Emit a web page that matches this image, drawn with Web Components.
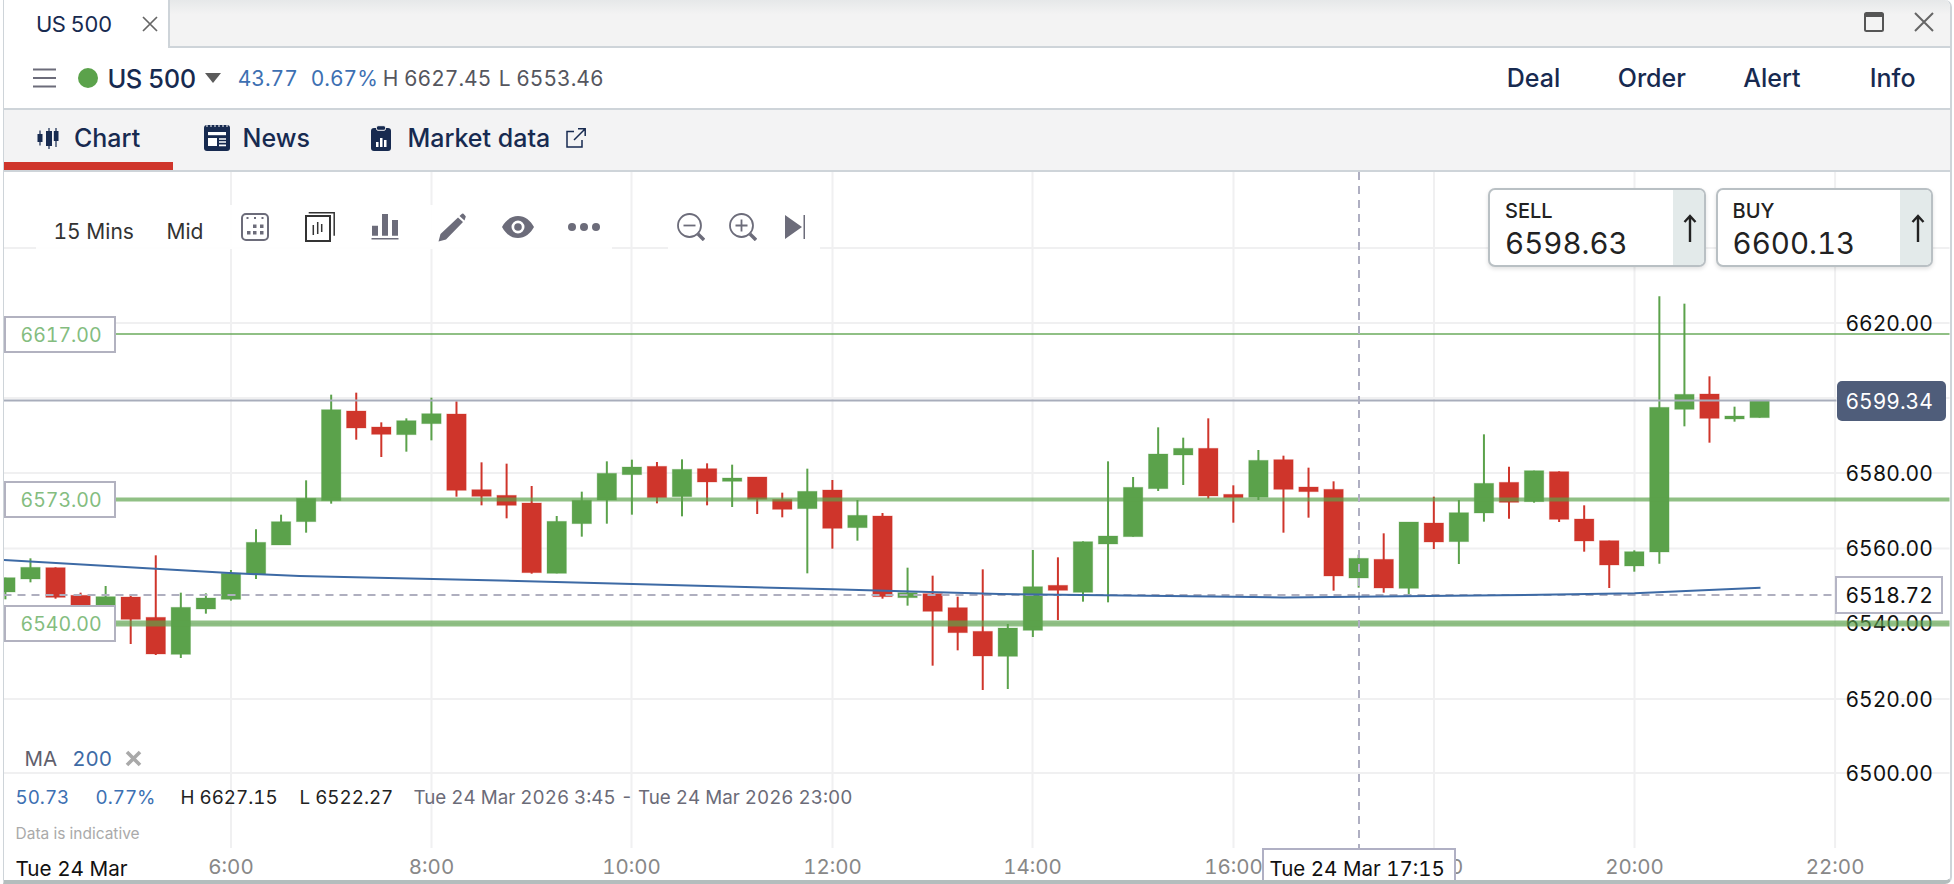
<!doctype html>
<html>
<head>
<meta charset="utf-8">
<title>US 500</title>
<style>
	html, body { margin: 0; padding: 0; background: #fff; }
	body {
		width: 1954px;
		height: 884px;
		overflow: hidden;
		font-family: Inter, "Liberation Sans", sans-serif;
		font-variant-numeric: tabular-nums;
	}
</style>
</head>
<body>
<chart-window>
	<title-bar></title-bar>
	<instrument-bar></instrument-bar>
	<section-tabs></section-tabs>
	<candle-chart></candle-chart>
</chart-window>

<script>
const NAVY = '#172a50';
const GREY = '#6c6c7a';

class ChartWindow extends HTMLElement {
	constructor() {
		super();
		this.attachShadow({ mode: 'open' }).innerHTML = `
<style>
	:host {
		display: flex;
		flex-direction: column;
		box-sizing: border-box;
		height: 884px;
		margin-left: 3px;
		width: 1949px;
		border-left: 1.5px solid #ced4d9;
		border-right: 2px solid #ced4d9;
		border-bottom: 4px solid #b4bdbd;
		border-top-right-radius: 7px;
		border-bottom-right-radius: 7px;
		overflow: hidden;
		background: #fff;
	}
</style>
<slot></slot>
		`;
	}
}

class TitleBar extends HTMLElement {
	constructor() {
		super();
		this.attachShadow({ mode: 'open' }).innerHTML = `
<style>
	:host {
		display: flex;
		height: 48px;
		box-sizing: border-box;
		background: linear-gradient(#e6e8e9, #f3f3f3 30%);
		font-size: 22px;
		color: ${NAVY};
	}
	.tab {
		display: flex;
		align-items: center;
		box-sizing: border-box;
		width: 166px;
		height: 48px;
		padding-left: 32px;
		background: #fff;
		border-right: 2px solid #ced4d9;
		letter-spacing: -0.6px;
	}
	.tab svg { margin-left: 30px; }
	.rest {
		flex: 1;
		display: flex;
		align-items: center;
		justify-content: flex-end;
		gap: 30px;
		padding: 0 16px 2px 0;
		border-bottom: 2px solid #ced4d9;
	}
</style>
<div class="tab">
	<span>US 500</span>
	<svg width="16" height="16" viewBox="0 0 16 16"><path d="M1 1l14 14M15 1L1 15" stroke="#666" stroke-width="1.7"/></svg>
</div>
<div class="rest">
	<svg width="20" height="20" viewBox="0 0 20 20"><rect x="1" y="1" width="18" height="18" rx="1.5" fill="none" stroke="#555" stroke-width="2"/><rect x="1" y="1" width="18" height="4" fill="#555"/></svg>
	<svg width="20" height="20" viewBox="0 0 20 20"><path d="M1 1l18 18M19 1L1 19" stroke="#666" stroke-width="2"/></svg>
</div>
		`;
	}
}

class InstrumentBar extends HTMLElement {
	constructor() {
		super();
		this.attachShadow({ mode: 'open' }).innerHTML = `
<style>
	:host {
		display: flex;
		align-items: center;
		box-sizing: border-box;
		height: 62px;
		padding-left: 28.5px;
		border-bottom: 2px solid #ced4d9;
		font-size: 21px;
		color: #55565e;
	}
	.menu { margin-right: 22px; }
	.dot {
		width: 20px;
		height: 20px;
		border-radius: 50%;
		background: #5ba24b;
		margin-right: 10px;
	}
	.name {
		font-size: 25.5px;
		font-weight: 500;
		color: ${NAVY};
		letter-spacing: -0.6px;
		margin-right: 9px;
	}
	.blue { color: #3d70b2; }
	.caret { margin-right: 17px; }
	.stats {
		display: grid;
		grid-template-columns: 73px 72px 116px auto;
	}
	.actions {
		margin-left: auto;
		margin-right: 34.5px;
		display: grid;
		grid-template-columns: 111px 125.5px 126.5px auto;
		font-size: 25px;
		font-weight: 500;
		color: ${NAVY};
	}
</style>
<svg class="menu" width="23" height="20" viewBox="0 0 23 20"><path d="M0 1.5h23M0 10h23M0 18.5h23" stroke="${GREY}" stroke-width="2.2"/></svg>
<span class="dot"></span>
<span class="name">US 500</span>
<svg class="caret" width="16" height="10" viewBox="0 0 16 10"><path d="M0 0h16L8 10z" fill="#5b5b5b"/></svg>
<div class="stats">
	<span class="blue">43.77</span>
	<span class="blue">0.67%</span>
	<span>H 6627.45</span>
	<span>L 6553.46</span>
</div>
<div class="actions"><span>Deal</span><span>Order</span><span>Alert</span><span>Info</span></div>
		`;
	}
}

class SectionTabs extends HTMLElement {
	constructor() {
		super();
		this.attachShadow({ mode: 'open' }).innerHTML = `
<style>
	:host {
		display: flex;
		box-sizing: border-box;
		height: 62px;
		background: #f3f3f4;
		border-bottom: 2px solid #ced4d9;
		font-size: 25px;
		font-weight: 500;
		color: ${NAVY};
	}
	.tab {
		display: flex;
		align-items: center;
		box-sizing: border-box;
		height: 60px;
		padding-bottom: 4px;
	}
	.chart {
		width: 169px;
		padding: 4px 0 0 33px;
		gap: 15px;
		border-bottom: 8px solid #cf352b;
	}
	.news { margin-left: 30.5px; gap: 13px; }
	.market { margin-left: 61.5px; gap: 16px; }
</style>
<div class="tab chart">
	<svg width="22" height="21" viewBox="0 0 22 21" fill="${NAVY}">
		<path d="M2.4 2.5h1.2v15H2.4zM11.4 0h1.2v21h-1.2zM18.4 0h1.2v19h-1.2z"/>
		<rect x="0.5" y="6" width="5" height="8"/><rect x="9" y="3" width="6" height="15"/><rect x="16.8" y="3" width="4.7" height="10"/>
	</svg>
	<span>Chart</span>
</div>
<div class="tab news">
	<svg width="26" height="26" viewBox="0 0 26 26">
		<rect width="26" height="26" rx="3" fill="${NAVY}"/>
		<path d="M2 1h22" stroke="#fff" stroke-width="1" stroke-dasharray="2 2"/>
		<rect x="4" y="7" width="18" height="3.2" fill="#fff"/>
		<rect x="4" y="13" width="9" height="8" fill="#fff"/>
		<path d="M15 14h7M15 17h7M15 20.4h7" stroke="#fff" stroke-width="1.6"/>
	</svg>
	<span>News</span>
</div>
<div class="tab market">
	<svg width="20" height="26" viewBox="0 0 20 26">
		<rect y="3" width="20" height="23" rx="3" fill="${NAVY}"/>
		<rect x="5.5" y="0.7" width="9" height="4.6" rx="1.5" fill="${NAVY}" stroke="#f3f3f4" stroke-width="1"/>
		<path d="M5 17h2.5v5H5zM9 13h2.5v9H9zM13 15h2.5v7H13z" fill="#fff"/>
	</svg>
	<span>Market data</span>
	<svg width="20" height="20" viewBox="0 0 20 20" fill="none" stroke="${NAVY}" stroke-width="1.5">
		<path d="M8 3.5H1V19h15v-7M8 12L19 1M12 .8h7.2V8"/>
	</svg>
</div>
		`;
	}
}

class PriceCard extends HTMLElement {
	constructor() {
		super();
		this.attachShadow({ mode: 'open' }).innerHTML = `
<style>
	:host {
		display: flex;
		box-sizing: border-box;
		width: 217.5px;
		height: 79px;
		background: #fff;
		border: 2px solid #b9c0c4;
		border-radius: 7px;
		box-shadow: 0 2px 4px rgba(0,0,0,.12);
		overflow: hidden;
		color: #222;
	}
	.text {
		flex: 1;
		padding: 10px 0 0 15px;
	}
	.label { font-size: 20px; font-weight: 500; line-height: 22px; }
	.value { font-size: 29.5px; line-height: 38px; margin-top: 2px; }
	.side {
		display: flex;
		align-items: center;
		justify-content: center;
		box-sizing: border-box;
		width: 31px;
		padding-left: 4px;
		background: #e3eaea;
	}
</style>
<div class="text">
	<div class="label"><slot name="label"></slot></div>
	<div class="value"><slot name="value"></slot></div>
</div>
<div class="side">
	<svg width="14" height="28" viewBox="0 0 14 28" fill="none" stroke="#222" stroke-width="2.4"><path d="M7 28V2M1.5 8L7 2l5.5 6"/></svg>
</div>
		`;
	}
}

class ChartToolbar extends HTMLElement {
	constructor() {
		super();
		this.attachShadow({ mode: 'open' }).innerHTML = `
<style>
	:host {
		position: absolute;
		left: 32px;
		top: 33px;
		display: flex;
		gap: 56px;
		font-size: 21px;
		color: #333;
	}
	.group {
		display: flex;
		align-items: center;
		height: 44px;
		background: rgba(255,255,255,.93);
		padding: 0 12px 0 17.5px;
	}
	.group.zoom { padding: 0 15px 0 9px; }
	.group span { box-sizing: border-box; padding-top: 8px; white-space: nowrap; }
	.mins { width: 113px; }
	.mid { width: 74px; }
	svg { display: block; flex: none; }
</style>
<div class="group">
	<span class="mins">15 Mins</span>
	<span class="mid">Mid</span>
	<svg width="28" height="28" viewBox="0 0 28 28" fill="${GREY}" style="margin-right:36px">
		<rect x="1" y="1" width="26" height="26" rx="4" fill="none" stroke="${GREY}" stroke-width="2"/>
		<path d="M5.5 4h2v2h-2zM13 4h2v2h-2zM20.5 4h2v2h-2zM12 11.5h3.5V15H12zM19 11.5h3.5V15H19zM6 18h3.5v3.5H6zM12 18h3.5v3.5H12zM19 18h3.5v3.5H19z"/>
	</svg>
	<svg width="30" height="30" viewBox="0 0 30 30" fill="none" stroke="#333" style="margin-right:36px">
		<path d="M3.7.8h25.5v23" stroke-width="1.5"/>
		<rect x="1" y="4" width="24" height="25" stroke-width="2"/>
		<path d="M8.3 13v10M12.7 10v12M16.7 12v8" stroke-width="1.5"/>
	</svg>
	<svg width="28" height="26" viewBox="0 0 28 26" fill="${GREY}" style="margin-right:39px">
		<path d="M1 11.7h6v10H1zM11 0h6v21.7h-6zM21 6h6v15.7h-6zM.5 24h27v1.5H.5z"/>
	</svg>
	<svg width="28" height="29" viewBox="0 0 28 29" fill="${GREY}" style="margin-right:36px">
		<path d="M.5 28.5L2.5 21 20 4.5 25 9 8 26.5zM21.5 3L24 .8q.8-.6 1.5 0l2 2.2q.6.8 0 1.5L26.5 7.5z"/>
	</svg>
	<svg width="32" height="22" viewBox="0 0 32 22" fill="${GREY}" style="margin-right:34px">
		<path fill-rule="evenodd" d="M16 0C9 0 3.5 4.5 0 11c3.5 6.5 9 11 16 11s12.5-4.5 16-11C28.5 4.5 23 0 16 0zm0 4.5a6.500 6.500 0 1 1 0 13 6.500 6.500 0 0 1 0-13z"/>
		<circle cx="16" cy="11" r="3.8"/>
	</svg>
	<svg width="32" height="10" viewBox="0 0 32 10" fill="${GREY}">
		<circle cx="4" cy="5" r="4"/><circle cx="16" cy="5" r="4"/><circle cx="28" cy="5" r="4"/>
	</svg>
</div>
<div class="group zoom">
	<svg width="28" height="28" viewBox="0 0 28 28" fill="none" stroke="${GREY}" style="margin-right:24px">
		<circle cx="12.5" cy="12.5" r="11.5" stroke-width="1.8"/>
		<path d="M6.5 12.5h12" stroke-width="1.8"/>
		<path d="M21 21l6 6" stroke-width="3.4"/>
	</svg>
	<svg width="28" height="28" viewBox="0 0 28 28" fill="none" stroke="${GREY}" style="margin-right:28px">
		<circle cx="12.5" cy="12.5" r="11.5" stroke-width="1.8"/>
		<path d="M6.5 12.5h12M12.5 6.5v12" stroke-width="1.8"/>
		<path d="M21 21l6 6" stroke-width="3.4"/>
	</svg>
	<svg width="20" height="24" viewBox="0 0 20 24" fill="${GREY}"><path d="M0 0l17 12L0 24zM18.5 0H20v24h-1.5z"/></svg>
</div>
		`;
	}
}

// body of each candle read off the reference: colour, wick top, wick bottom, body top, body bottom
// values are in 3x crop units, grouped by the crop's y origin
const G = 'g', R = 'r';
const candleGroups = [
	[280, [
		[G, 893, 958, 893, 936], [G, 835, 907, 862, 897], [R, 862, 956, 863, 952], [R, 938, 990, 946, 985],
		[G, 918, 985, 950, 980], [R, 943, 1092, 951, 1018], [R, 826, 1125, 1012, 1122], [G, 938, 1134, 982, 1123],
		[G, 940, 1001, 954, 987], [G, 870, 962, 880, 958], [G, 748, 897, 787, 882], [G, 704, 795, 725, 795],
		[G, 601, 758, 655, 725], [G, 344, 671, 389, 662], [R, 338, 479, 393, 444], [R, 427, 531, 441, 463],
		[G, 415, 515, 422, 464], [G, 353, 481, 401, 431], [R, 364, 650, 402, 631], [R, 547, 676, 629, 649],
	]],
	[380, [
		[R, 251, 415, 346, 376], [R, 318, 581, 369, 578], [G, 408, 580, 424, 580], [G, 335, 470, 361, 431],
		[G, 244, 431, 280, 360], [G, 239, 404, 261, 284], [R, 246, 370, 259, 353], [G, 238, 409, 268, 350],
		[R, 250, 376, 266, 306], [G, 254, 381, 294, 304], [R, 291, 402, 291, 358], [R, 338, 412, 358, 388],
		[G, 266, 580, 334, 386], [R, 300, 506, 330, 445], [G, 360, 482, 406, 443], [R, 399, 656, 408, 650],
		[G, 563, 677, 638, 653], [R, 587, 857, 641, 694], [R, 650, 811, 683, 758], [R, 568, 930, 754, 828],
	]],
	[400, [
		[G, 672, 867, 684, 769], [G, 450, 711, 560, 691], [R, 472, 660, 556, 571], [G, 424, 605, 425, 577],
		[G, 184, 607, 408, 432], [G, 231, 410, 262, 410], [G, 82, 273, 162, 266], [G, 113, 255, 145, 165],
		[R, 55, 296, 145, 288], [R, 256, 368, 283, 293], [G, 150, 300, 181, 292], [R, 167, 398, 179, 268],
		[R, 203, 353, 261, 275], [R, 244, 572, 268, 528], [G, 464, 563, 475, 534], [R, 400, 578, 478, 564],
		[G, 366, 585, 366, 565], [R, 290, 447, 369, 426], [G, 300, 492, 338, 425], [G, 103, 365, 250, 339],
	]],
	[280, [
		[R, 560, 716, 607, 667], [G, 572, 668, 572, 665], [R, 574, 726, 575, 718], [R, 676, 815, 717, 783],
		[R, 782, 924, 782, 855], [G, 811, 875, 815, 858], [G, 49, 851, 382, 816], [G, 71, 439, 343, 388],
		[R, 289, 488, 342, 415], [G, 380, 425, 408, 417], [G, 360, 413, 360, 413],
	]],
];

const COLORS = { g: '#5ba24b', r: '#cf352b' };
const gridX = [231.5, 432, 632, 833, 1033, 1234, 1434.5, 1635, 1835.6];
const gridY = [248, 323, 398, 473, 548.5, 623.7, 699, 773];
const axisPrices = [[323, '6620.00'], [473, '6580.00'], [548.5, '6560.00'], [623.7, '6540.00'], [699, '6520.00'], [773.5, '6500.00']];
const times = ['6:00', '8:00', '10:00', '12:00', '14:00', '16:00', '18:00', '20:00', '22:00'];
const maLine = '4,560 156,568.7 230,573 300,576 500,580.5 633,584 833,589.3 1000,594 1234,596.7 1284,597.5 1500,595.3 1635,593.3 1761,587.7';

const candleMarkup = () => {
	let out = '';
	let i = 0;
	const toY = (base, v) => base + v / 3;
	for (const [base, list] of candleGroups) {
		for (const [c, wt, wb, bt, bb] of list) {
			const x = 5.9 + 25.06 * i;
			const fill = COLORS[c];
			const top = toY(base, bt);
			const h = toY(base, bb) - top;
			out += `<path d="M${x} ${toY(base, wt)}V${toY(base, wb)}" stroke="${fill}" stroke-width="2"/>`;
			out += `<rect x="${x - 9.7}" y="${top}" width="19.4" height="${h}" fill="${fill}" stroke="${fill}" stroke-opacity=".3"/>`;
			i++;
		}
	}
	return out;
};

class LevelTag extends HTMLElement {
	constructor() {
		super();
		this.attachShadow({ mode: 'open' }).innerHTML = `
<style>
	:host {
		position: absolute;
		left: 0;
		display: flex;
		align-items: center;
		box-sizing: border-box;
		width: 111.5px;
		height: 37px;
		padding-left: 14.5px;
		background: #fff;
		border: 2px solid #b2b2c0;
		font-size: 19.5px;
		color: #84bd7f;
	}
</style>
<slot></slot>
		`;
	}
	connectedCallback() {
		this.style.top = (this.getAttribute('y') - 172) + 'px';
	}
}

class AxisTag extends HTMLElement {
	constructor() {
		super();
		this.attachShadow({ mode: 'open' }).innerHTML = `
<style>
	:host {
		position: absolute;
		display: flex;
		align-items: center;
		box-sizing: border-box;
		font-size: 21px;
	}
	:host([kind="last"]) {
		left: 1832.5px;
		top: 209px;
		width: 109px;
		height: 40px;
		padding-left: 9px;
		background: #4f5d7a;
		border-radius: 5px;
		color: #fff;
	}
	:host([kind="ref"]) {
		left: 1830.5px;
		top: 404px;
		width: 108px;
		height: 38px;
		padding-left: 9px;
		background: #fff;
		border: 2px solid #b5b5c5;
		color: #111;
	}
</style>
<slot></slot>
		`;
	}
}

class CandleChart extends HTMLElement {
	constructor() {
		super();
		const vLines = gridX.map(x => `<path d="M${x} 172V848"/>`).join('');
		const hLines = gridY.map(y => `<path d="M4 ${y}H1950"/>`).join('');
		const prices = axisPrices.map(([y, t]) => `<text x="1846" y="${y + 7.5}" fill="#111" font-size="21">${t}</text>`).join('');
		const timeLabels = gridX.map((x, i) => `<text x="${x}" y="874" fill="#888" font-size="20.5" text-anchor="middle">${times[i]}</text>`).join('');
		this.attachShadow({ mode: 'open' }).innerHTML = `
<style>
	:host {
		display: block;
		position: relative;
		flex: 1;
		overflow: hidden;
		background: #fff;
	}
	svg.plot {
		position: absolute;
		left: 0;
		top: 0;
		width: 1947px;
		height: 708px;
	}
	text { font-family: Inter, "Liberation Sans", sans-serif; }
	.cards {
		position: absolute;
		right: 17px;
		top: 16px;
		display: flex;
		gap: 10px;
	}
	.legend {
		position: absolute;
		left: 0;
		top: 572px;
		display: flex;
		align-items: center;
		box-sizing: border-box;
		width: 154px;
		height: 28px;
		padding-left: 20.5px;
		background: #fff;
		font-size: 20.5px;
		color: #60606c;
	}
	.legend .blue { color: #3d6aa5; margin: 0 13px 0 15px; }
	.stats {
		position: absolute;
		left: 11.5px;
		top: 614px;
		display: grid;
		grid-template-columns: 80px 85px 119px 114px auto;
		font-size: 18.8px;
		white-space: pre;
		color: #222;
	}
	.stats .blue { color: #3d70b2; }
	.stats .when { color: #6b6b78; }
	.note {
		position: absolute;
		left: 11.5px;
		top: 652px;
		font-size: 15.5px;
		color: #aaa;
	}
	.day {
		position: absolute;
		left: 11.5px;
		top: 684px;
		font-size: 20.7px;
		color: #111;
	}
	.stamp {
		position: absolute;
		left: 1257.5px;
		top: 676px;
		box-sizing: border-box;
		width: 194px;
		height: 32px;
		padding: 6px 0 0 6px;
		background: #fff;
		border: 2px solid #b0b0c4;
		border-bottom: 0;
		font-size: 20.5px;
		color: #111;
		white-space: nowrap;
	}
</style>
<svg class="plot" viewBox="4.5 172 1947 708">
	<g stroke="#f0f0f1" stroke-width="2" fill="none">${vLines}${hLines}</g>
	${prices}
	${timeLabels}
	${candleMarkup()}
	<g stroke="#5ba24b" stroke-opacity=".68" fill="none">
		<path d="M4 334H1950" stroke-width="2"/>
		<path d="M4 499.5H1950" stroke-width="4"/>
		<path d="M4 623.5H1950" stroke-width="6"/>
	</g>
	<path d="M4 400.6H1837" stroke="#a8adbb" stroke-width="2"/>
	<path d="M4 595H1835" stroke="#afafbf" stroke-width="2" stroke-dasharray="8 6"/>
	<path d="M1359.5 172V848" stroke="#afafc2" stroke-width="2" stroke-dasharray="8 6"/>
	<polyline points="${maLine}" fill="none" stroke="#3d6aa5" stroke-width="2"/>
</svg>
<level-tag y="316">6617.00</level-tag>
<level-tag y="481">6573.00</level-tag>
<level-tag y="605">6540.00</level-tag>
<axis-tag kind="last">6599.34</axis-tag>
<axis-tag kind="ref">6518.72</axis-tag>
<chart-toolbar></chart-toolbar>
<div class="cards">
	<price-card><span slot="label">SELL</span><span slot="value">6598.63</span></price-card>
	<price-card><span slot="label">BUY</span><span slot="value">6600.13</span></price-card>
</div>
<div class="legend">MA<span class="blue">200</span><svg width="17" height="17" viewBox="0 0 17 17"><path d="M2 2l13 13M15 2L2 15" stroke="#a9a9a9" stroke-width="3.6"/></svg></div>
<div class="stats"><span class="blue">50.73</span><span class="blue">0.77%</span><span>H 6627.15</span><span>L 6522.27</span><span class="when">Tue 24 Mar 2026 3:45 - Tue 24 Mar 2026 23:00</span></div>
<div class="note">Data is indicative</div>
<div class="day">Tue 24 Mar</div>
<div class="stamp">Tue 24 Mar 17:15</div>
		`;
	}
}

customElements.define('chart-window', ChartWindow);
customElements.define('title-bar', TitleBar);
customElements.define('instrument-bar', InstrumentBar);
customElements.define('section-tabs', SectionTabs);
customElements.define('price-card', PriceCard);
customElements.define('chart-toolbar', ChartToolbar);
customElements.define('level-tag', LevelTag);
customElements.define('axis-tag', AxisTag);
customElements.define('candle-chart', CandleChart);
</script>
</body>
</html>
